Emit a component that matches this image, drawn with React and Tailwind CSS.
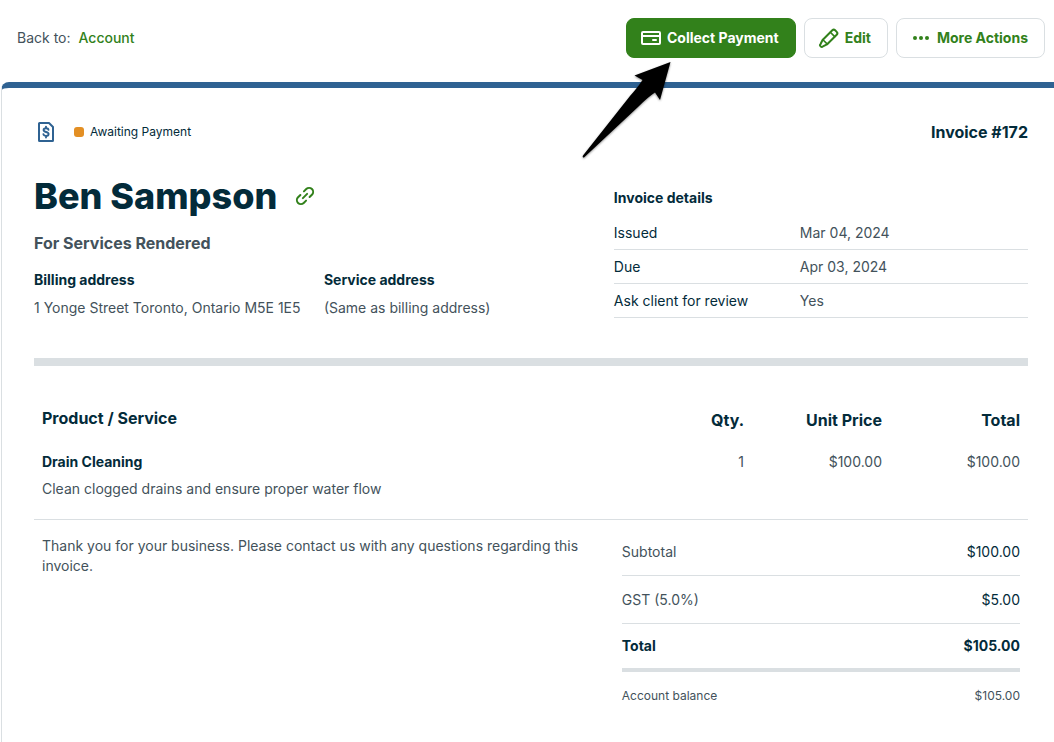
import React from 'react'

/* ── Sample data ── */
const DETAILS = [
  { label: 'Issued', value: 'Mar 04, 2024' },
  { label: 'Due', value: 'Apr 03, 2024' },
  { label: 'Ask client for review', value: 'Yes' },
]

const LINE_ITEMS = [
  {
    name: 'Drain Cleaning',
    description: 'Clean clogged drains and ensure proper water flow',
    qty: 1,
    unitPrice: '$100.00',
    total: '$100.00',
  },
]

/* ── Icons ── */
function Icon({ children, className = '' }) {
  return (
    <svg
      viewBox="0 0 24 24"
      fill="none"
      stroke="currentColor"
      strokeWidth="2"
      strokeLinecap="round"
      strokeLinejoin="round"
      aria-hidden="true"
      className={`size-6 shrink-0 ${className}`}
    >
      {children}
    </svg>
  )
}

function CardIcon() {
  return (
    <Icon>
      <rect x="3" y="6" width="18" height="12" rx="1" />
      <path d="M3 10h18M14 14h3" />
    </Icon>
  )
}

function PencilIcon() {
  return (
    <Icon>
      <g transform="rotate(-45 12 12)">
        <path d="M6 8.900h13.800a2 2 0 0 1 2 2v2.200a2 2 0 0 1-2 2H6L1.800 13.700a1.500 1.500 0 0 1 0-3.400z" />
        <path d="M17 8.900v6.200M6.500 8.900v6.200" strokeWidth="1.600" />
      </g>
    </Icon>
  )
}

function MoreIcon() {
  return (
    <Icon>
      <g fill="currentColor" stroke="none">
        <circle cx="6" cy="12" r="2" />
        <circle cx="12" cy="12" r="2" />
        <circle cx="18" cy="12" r="2" />
      </g>
    </Icon>
  )
}

function InvoiceIcon() {
  return (
    <Icon className="text-[#2f6292]">
      <path d="M5.500 3H15l4 4v13.500a.5.5 0 0 1-.5.5h-13a.5.5 0 0 1-.5-.5v-17a.5.5 0 0 1 .5-.5z" />
      <path d="M14.500 9.800C14.300 8.700 13.300 8.200 12 8.200c-1.400 0-2.400.7-2.400 1.800 0 2.600 5 1.400 5 4 0 1.200-1.100 1.900-2.600 1.900-1.400 0-2.400-.6-2.600-1.700M12 6.600v1.600M12 15.900v1.600" strokeWidth="1.900" />
    </Icon>
  )
}

function LinkIcon() {
  return (
    <Icon>
      <g transform="rotate(-45 12 12)">
        <path d="M9.500 16H6.200a4 4 0 0 1 0-8h3.300M14.500 8h3.300a4 4 0 0 1 0 8h-3.300M9 12h6" />
      </g>
    </Icon>
  )
}

/* ── Pieces ── */
function ActionButton({ icon, primary = false, children }) {
  const tone = primary
    ? 'border-[#32811b] bg-[#32811b] text-white'
    : 'border-[#dadfe2] bg-white text-[#32811b]'
  return (
    <button
      type="button"
      className={`flex h-10 items-center gap-1 rounded-lg border pr-4 pl-3 text-sm font-bold whitespace-nowrap ${tone}`}
    >
      {icon}
      {children}
    </button>
  )
}

function PointerArrow() {
  return (
    <svg
      viewBox="0 0 100 106"
      aria-hidden="true"
      className="pointer-events-none absolute top-full -left-12 h-[106px] w-[100px] drop-shadow-[0_1px_1px_rgba(0,0,0,0.45)]"
    >
      <path d="M92.500 4L56.500 17.500L64.500 22Q60 29 52 38L5 97.500Q4 99.500 6 99.500L60 49Q70 39 77 34.500L82 42Z" />
    </svg>
  )
}

function TopBar() {
  return (
    <header className="flex items-center justify-between pt-[18px] pr-[9px] pb-6 pl-[17px]">
      <nav className="flex gap-2 leading-5">
        <span>Back to:</span>
        <a href="#account" className="font-medium text-[#32811b]">Account</a>
      </nav>
      <div className="flex gap-2">
        <div className="relative">
          <ActionButton primary icon={<CardIcon />}>Collect Payment</ActionButton>
          <PointerArrow />
        </div>
        <ActionButton icon={<PencilIcon />}>Edit</ActionButton>
        <ActionButton icon={<MoreIcon />}>More Actions</ActionButton>
      </div>
    </header>
  )
}

function Address({ title, children }) {
  return (
    <div className="w-1/2 whitespace-nowrap">
      <h3 className="font-bold text-[#032b3a]">{title}</h3>
      <p className="mt-2">{children}</p>
    </div>
  )
}

function InvoiceHeader() {
  return (
    <section className="mt-[30px] flex border-b-8 border-[#dadfe2] pb-10">
      <div className="w-7/12">
        <div className="flex h-11 items-center gap-4">
          <h1 className="text-4xl font-extrabold text-[#032b3a]">Ben Sampson</h1>
          <a href="#client" aria-label="Client link" className="text-[#32811b]">
            <LinkIcon />
          </a>
        </div>
        <h2 className="mt-[13px] text-base font-bold">For Services Rendered</h2>
        <div className="mt-[15px] flex">
          <Address title="Billing address">1 Yonge Street Toronto, Ontario M5E 1E5</Address>
          <Address title="Service address">(Same as billing address)</Address>
        </div>
      </div>

      <div className="w-5/12 pt-[14px]">
        <h3 className="mb-2 font-bold text-[#032b3a]">Invoice details</h3>
        <dl>
          {DETAILS.map(row => (
            <div key={row.label} className="flex border-b border-[#dadfe2] pt-[7px] pb-[6px]">
              <dt className="w-[186px] text-[#032b3a]">{row.label}</dt>
              <dd>{row.value}</dd>
            </div>
          ))}
        </dl>
      </div>
    </section>
  )
}

function LineItems() {
  return (
    <table className="mt-[38px] w-full table-fixed border-b border-[#dadfe2]">
      <thead className="text-base text-[#032b3a]">
        <tr>
          <th className="px-2 text-left font-bold">Product / Service</th>
          <th className="w-[138px] px-2 pt-1 text-right font-bold">Qty.</th>
          <th className="w-[138px] px-2 pt-1 text-right font-bold">Unit Price</th>
          <th className="w-[138px] px-2 pt-1 text-right font-bold">Total</th>
        </tr>
      </thead>
      <tbody>
        {LINE_ITEMS.map(item => (
          <tr key={item.name} className="align-top">
            <td className="px-2 pt-5 pb-5">
              <p className="font-bold text-[#032b3a]">{item.name}</p>
              <p className="mt-[7px]">{item.description}</p>
            </td>
            <td className="px-2 pt-5 text-right">{item.qty}</td>
            <td className="px-2 pt-5 text-right">{item.unitPrice}</td>
            <td className="px-2 pt-5 text-right">{item.total}</td>
          </tr>
        ))}
      </tbody>
    </table>
  )
}

function Totals() {
  return (
    <dl className="w-5/12 px-2 pt-2">
      <div className="flex h-12 items-center justify-between border-b border-[#dadfe2]">
        <dt>Subtotal</dt>
        <dd className="text-[#032b3a]">$100.00</dd>
      </div>
      <div className="flex h-12 items-center justify-between border-b border-[#dadfe2]">
        <dt>GST (5.0%)</dt>
        <dd className="text-[#032b3a]">$5.00</dd>
      </div>
      <div className="flex h-12 items-center justify-between border-b-4 border-[#dadfe2] font-bold text-[#032b3a]">
        <dt>Total</dt>
        <dd>$105.00</dd>
      </div>
      <div className="flex h-12 items-center justify-between text-xs">
        <dt>Account balance</dt>
        <dd>$105.00</dd>
      </div>
    </dl>
  )
}

export default function App() {
  return (
    <div className="flex min-h-screen flex-col bg-white font-['Inter',sans-serif] text-sm text-[#43525b]">
      <TopBar />
      <main className="ml-px flex-1 rounded-tl-lg border-t-6 border-l border-t-[#2f6292] border-l-[#dadfe2] pt-8 pr-[26px] pb-5 pl-8">
        <div className="flex h-6 items-center justify-between">
          <div className="flex items-center">
            <InvoiceIcon />
            <span className="ml-4 size-[10px] rounded-[3px] bg-[#e38f24]" />
            <span className="ml-1.5 text-xs text-[#032b3a]">Awaiting Payment</span>
          </div>
          <span className="text-base font-bold text-[#032b3a]">Invoice #172</span>
        </div>

        <InvoiceHeader />
        <LineItems />

        <section className="flex">
          <p className="w-7/12 pt-4 pr-6 pl-2">
            Thank you for your business. Please contact us with any questions regarding this invoice.
          </p>
          <Totals />
        </section>
      </main>
    </div>
  )
}
